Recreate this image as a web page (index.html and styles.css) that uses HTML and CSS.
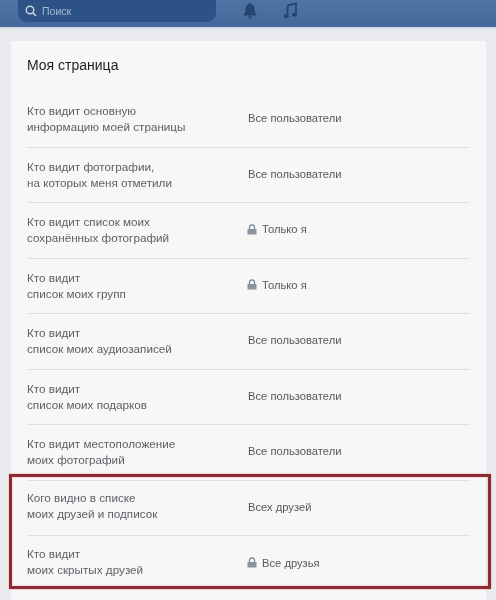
FILE: index.html
```html
<!DOCTYPE html>
<html lang="ru">
<head>
<meta charset="utf-8">
<title>Настройки приватности</title>
<link rel="stylesheet" href="styles.css">
</head>
<body>
<header class="topbar">
  <div class="search">
    <svg class="search-icon" width="12" height="12" viewBox="0 0 12 12"><circle cx="5" cy="5" r="3.8" fill="none" stroke="#c3d0e2" stroke-width="1.5"/><path d="M8 8l3 3" stroke="#c3d0e2" stroke-width="1.7"/></svg>
    <span class="search-text">Поиск</span>
  </div>
  <svg class="bell" width="14" height="17" viewBox="0 0 14 17"><path d="M7 1c.8 0 1.2.5 1.3 1.2C10.500 2.800 11.500 4.500 11.500 7c0 3 .6 4.300 2 5.500v1H.5v-1c1.400-1.200 2-2.500 2-5.500 0-2.500 1-4.200 3.200-4.800C5.800 1.500 6.200 1 7 1z" fill="#25466f"/><path d="M5 14.500h4a2 2 0 0 1-4 0z" fill="#25466f"/></svg>
  <svg class="note" width="14" height="17" viewBox="0 0 14 17"><path d="M4.500 3.500 13 1.500v11.200" fill="none" stroke="#25466f" stroke-width="1.800"/><path d="M4.500 3.500v10.500" fill="none" stroke="#25466f" stroke-width="1.800"/><ellipse cx="3" cy="14.200" rx="2.500" ry="2" fill="#25466f"/><ellipse cx="11.300" cy="12.700" rx="2.500" ry="2" fill="#25466f"/></svg>
</header>
<main class="card">
  <h1 class="title">Моя страница</h1>
  <div class="row"><div class="label">Кто видит основную<br>информацию моей страницы</div><div class="value">Все пользователи</div></div>
  <div class="row"><div class="label">Кто видит фотографии,<br>на которых меня отметили</div><div class="value">Все пользователи</div></div>
  <div class="row"><div class="label">Кто видит список моих<br>сохранённых фотографий</div><div class="value"><svg class="lock" width="10" height="11" viewBox="0 0 10 11"><path d="M2.500 5V3.300a2.500 2.500 0 0 1 5 0V5" fill="none" stroke="#77808c" stroke-width="1.200"/><rect x=".5" y="5" width="9" height="5.500" fill="#8b939e"/></svg>Только я</div></div>
  <div class="row"><div class="label">Кто видит<br>список моих групп</div><div class="value"><svg class="lock" width="10" height="11" viewBox="0 0 10 11"><path d="M2.500 5V3.300a2.500 2.500 0 0 1 5 0V5" fill="none" stroke="#77808c" stroke-width="1.200"/><rect x=".5" y="5" width="9" height="5.500" fill="#8b939e"/></svg>Только я</div></div>
  <div class="row"><div class="label">Кто видит<br>список моих аудиозаписей</div><div class="value">Все пользователи</div></div>
  <div class="row"><div class="label">Кто видит<br>список моих подарков</div><div class="value">Все пользователи</div></div>
  <div class="row"><div class="label">Кто видит местоположение<br>моих фотографий</div><div class="value">Все пользователи</div></div>
  <div class="row row-raised"><div class="label">Кого видно в списке<br>моих друзей и подписок</div><div class="value">Всех друзей</div></div>
  <div class="row row-raised row-last"><div class="label">Кто видит<br>моих скрытых друзей</div><div class="value"><svg class="lock" width="10" height="11" viewBox="0 0 10 11"><path d="M2.500 5V3.300a2.500 2.500 0 0 1 5 0V5" fill="none" stroke="#77808c" stroke-width="1.200"/><rect x=".5" y="5" width="9" height="5.500" fill="#8b939e"/></svg>Все друзья</div></div>
  <div class="highlight"></div>
</main>
</body>
</html>
```

FILE: styles.css
```css
* { box-sizing: border-box; }
html, body { margin: 0; padding: 0; }
body {
  height: 600px;
  overflow: hidden;
  background: #e9ebee;
  font-family: "Liberation Sans", Arial, sans-serif;
}
.topbar {
  height: 27px;
  background: linear-gradient(#4f74a6, #45689a);
  display: flex;
  align-items: flex-start;
  padding-left: 18px;
  box-shadow: 0 1px 2px #c5d0dc;
}
.search {
  width: 198px;
  height: 22px;
  background: #2d5285;
  border-radius: 0 0 9px 9px;
  display: flex;
  align-items: center;
  padding-left: 7px;
  gap: 5px;
}
.search-text {
  font-size: 10.500px;
  color: #a9bbd3;
  filter: blur(0.6px);
}
.bell { margin: 2px 0 0 27px; }
.note { margin: 2px 0 0 26px; }
.card {
  position: relative;
  margin: 14px 10px 0 11px;
  height: 560px;
  background: #f7f7f7;
  padding: 0 16px;
}
.title {
  margin: 0;
  height: 51px;
  padding-top: 16px;
  font-size: 14px;
  line-height: 16px;
  font-weight: normal;
  color: #1f1f1f;
  filter: blur(0.4px);
}
.row {
  height: 55.500px;
  display: flex;
  align-items: center;
  border-bottom: 1px solid #dcdfe3;
}
.row-raised { padding-bottom: 3px; }
.row-last { border-bottom: 0; }
.label {
  width: 221px;
  font-size: 11.700px;
  line-height: 16px;
  color: #5d6167;
  filter: blur(0.6px);
}
.value {
  font-size: 11.200px;
  color: #55595f;
  display: flex;
  align-items: center;
  gap: 5px;
  padding-bottom: 2px;
  filter: blur(0.6px);
}
.row-raised .value {
  padding-bottom: 0;
  padding-top: 1px;
}
.lock { margin-left: -1px; }
.highlight {
  position: absolute;
  left: -2px;
  top: 433px;
  width: 482px;
  height: 115px;
  border: 3px solid #8e2a33;
  box-shadow: 0 0 2px #e8a0a0, inset 0 0 2px #e8a0a0;
}
```
